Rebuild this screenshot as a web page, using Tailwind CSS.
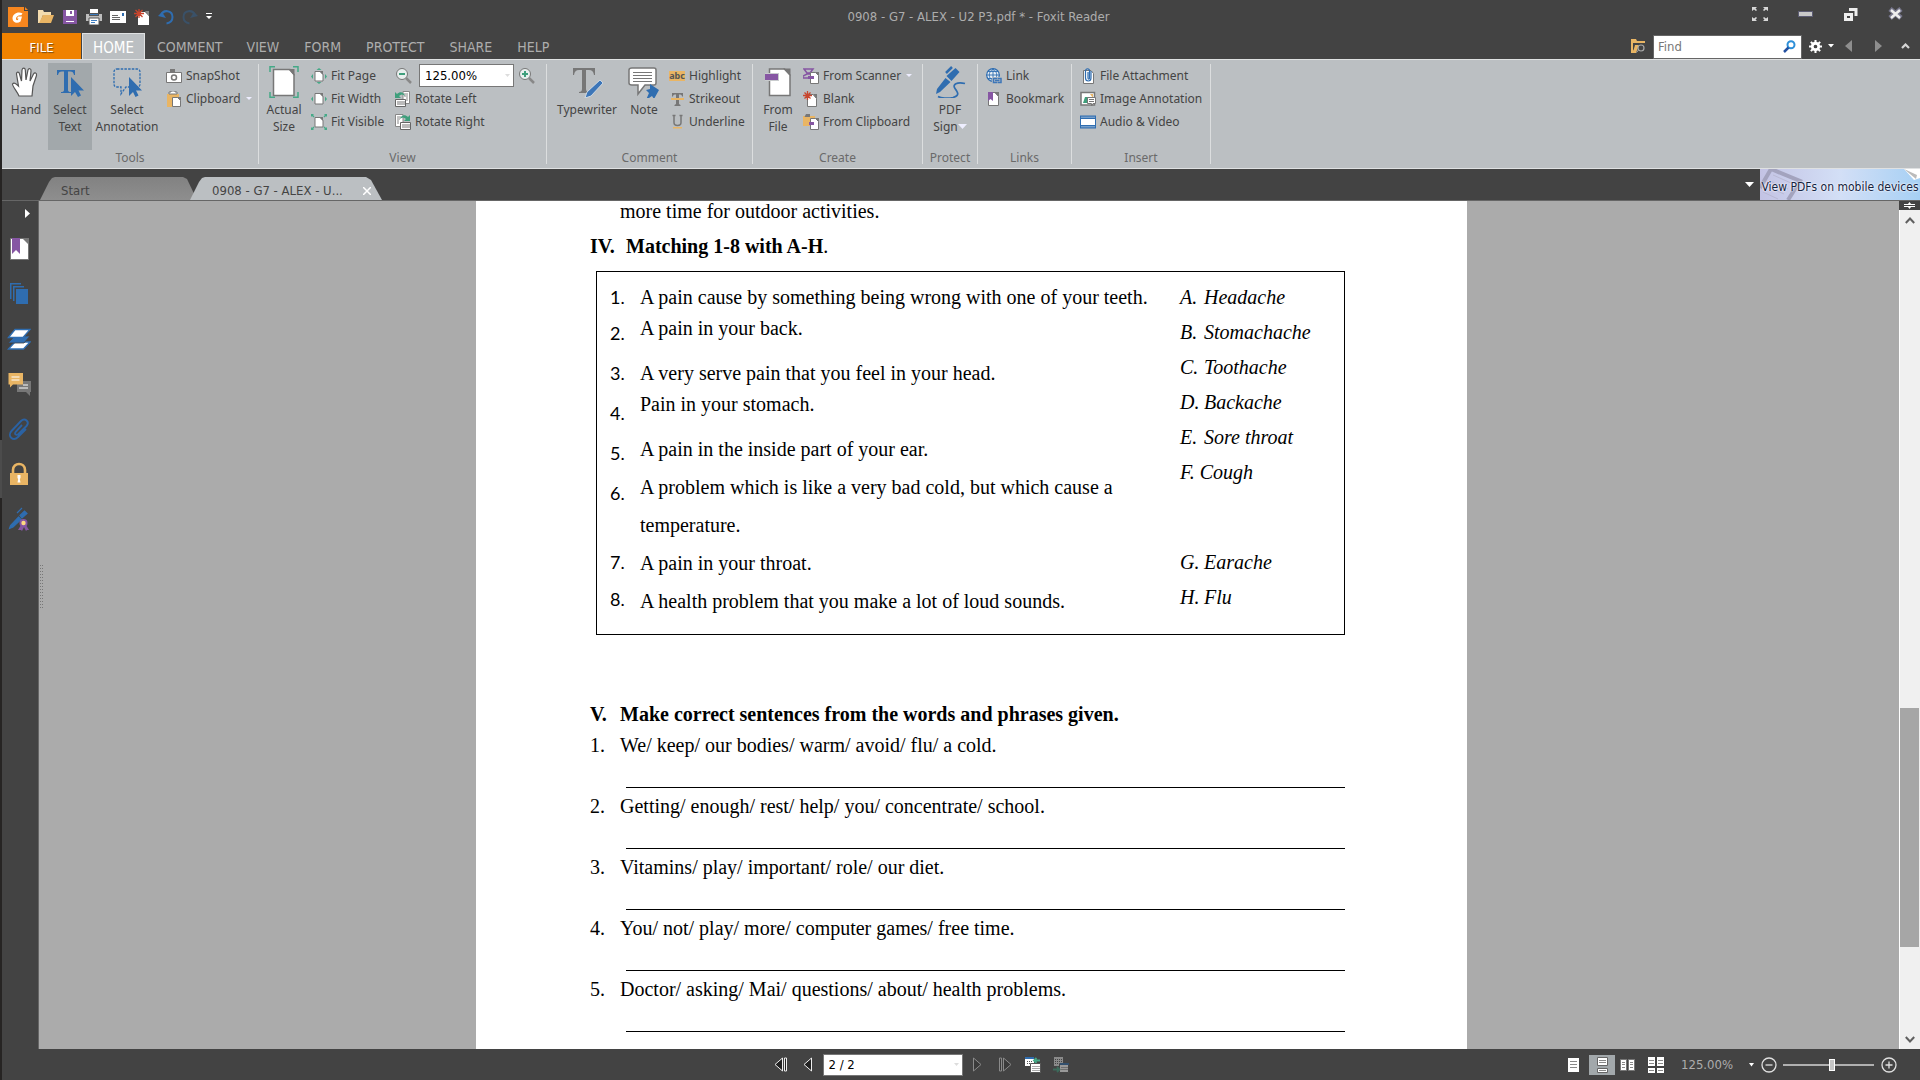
<!DOCTYPE html>
<html lang="en">
<head>
<meta charset="utf-8">
<meta name="viewport" content="width=device-width, initial-scale=1">
<title>0908 - G7 - ALEX - U2 P3.pdf * - Foxit Reader</title>
<script src="https://cdn.jsdelivr.net/npm/@tailwindcss/browser@4"></script>
</head>
<body class="flex h-screen overflow-hidden bg-[#434343] font-['DejaVu_Sans_Condensed','DejaVu_Sans',sans-serif] text-[13px] text-[#444]">

<!-- window edge -->
<div class="flex w-[2px] shrink-0 flex-col bg-[#262423]"><div class="grow-[440]"></div><div class="grow-[58] bg-[#4c4c4c]"></div><div class="grow-[582]"></div></div>

<div class="flex min-w-0 flex-1 flex-col">

<!-- title bar -->
<header class="grid h-[33px] shrink-0 grid-cols-[1fr_auto_1fr] items-start">
  <div class="flex h-[33px] items-center gap-2 pl-[6px]">
    <svg class="size-5" viewBox="0 0 20 20" aria-hidden="true"><path d="M0 0h16v4h4v16H0z" fill="#f6861f"/><path d="M17 0l3 3h-3z" fill="#f6861f"/><path d="M14.500 6.500C10 4 4.500 7 4.500 11.500c0 4 4.500 5.500 8 3l1.500-5H10l-1 2h1.500l-.6 1.600c-1.200.4-2-.3-1.900-1.500.2-2.500 3-4 5.300-3.300z" fill="#fff"/></svg>
    <button aria-label="Open" class="ml-[2px]"><svg class="size-4" viewBox="0 0 16 16"><path d="M0 1h5l1 2h7v3H5L2 14H0z" fill="#f3dcae"/><path d="M5 6h11l-3 8H1z" fill="#e9b564"/></svg></button>
    <button aria-label="Save"><svg class="size-4" viewBox="0 0 16 16"><path d="M1 1h14v14H1z" fill="#8656a3"/><path d="M4 1h8v6H4z" fill="#fff"/><path d="M8 2h2v3H8z" fill="#8656a3"/><path d="M4 12h8v1H4z" fill="#fff"/></svg></button>
    <button aria-label="Print"><svg class="size-4" viewBox="0 0 16 16"><path d="M4 0h8v4H4z" fill="#fff"/><path d="M0 5h16v7H0z" fill="#bdbdbd"/><path d="M3 4h10v3H3z" fill="#555"/><path d="M4 5h8v1H4z" fill="#3d7dc0"/><path d="M3 9h10v7H3z" fill="#fff" stroke="#555"/><path d="M5 11h6v1H5zM5 13h4v1H5z" fill="#3d7dc0"/></svg></button>
    <button aria-label="Email"><svg class="size-4" viewBox="0 0 16 16"><path d="M0 2h16v12H0z" fill="#fff"/><path d="M2 6h6v1H2zM2 8h8v1H2zM2 10h8v1H2z" fill="#666"/><path d="M12 4h2v3h-2z" fill="#2f6db0"/></svg></button>
    <button aria-label="New"><svg class="size-4" viewBox="0 0 16 16"><path d="M4 3h7l4 4v9H4z" fill="#fff"/><path d="M11 2h4v5z" fill="#888"/><path d="M5 0v9M0 4.500h10M1.500 1l7 7M8.500 1l-7 7" stroke="#c8452d" stroke-width="1.300"/></svg></button>
    <button aria-label="Undo"><svg class="size-4" viewBox="0 0 16 16"><path d="M3 6.500C5 0 14.500 1 14.500 8c0 4-3 6-6 6.500" fill="none" stroke="#2f6db0" stroke-width="2"/><path d="M0 7l4-4 4 6z" fill="#2f6db0"/></svg></button>
    <button aria-label="Redo"><svg class="size-4" viewBox="0 0 16 16"><path d="M13 6.500C11 0 1.500 1 1.500 8c0 4 3 6 6 6.500" fill="none" stroke="#3a5168" stroke-width="2"/><path d="M16 7l-4-4-4 6z" fill="#3a5168"/></svg></button>
    <button aria-label="Customize toolbar"><svg class="h-[7px] w-[6px]" viewBox="0 0 6 7"><path d="M0 0h6v1H0zM0 3h6L3 6z" fill="#fff"/></svg></button>
  </div>
  <h1 class="pl-[35px] leading-[34px] text-[#adadad]">0908 - G7 - ALEX - U2 P3.pdf * - Foxit Reader</h1>
  <div class="flex h-7 items-center justify-end gap-[30px] pr-[17px]">
    <button aria-label="Full screen"><svg class="size-4" viewBox="0 0 16 16" fill="#d8d8d8"><path d="M0 1h5L3.500 2.500 5 4 4 5 2 3.500 0 5zM16 1h-5l1.500 1.500L11 4l1 1 2-1.500L16 5zM0 15h5l-1.500-1.500L5 12l-1-1-2 1.500L0 11zM16 15h-5l1.500-1.500L11 12l1-1 2 1.500 2-1.500z"/></svg></button>
    <button aria-label="Minimize"><svg class="h-4 w-[15px]" viewBox="0 0 15 16"><path d="M.5 5.500h14v5H.5z" fill="#c9c9c9" stroke="#5c5c74"/></svg></button>
    <button aria-label="Restore"><svg class="h-4 w-[15px]" viewBox="0 0 15 16" fill="none" stroke="#eee" stroke-width="3"><path d="M2.500 8.500h6v5h-6z"/><path d="M6 3.500h7V10"/></svg></button>
    <button aria-label="Close"><svg class="h-4 w-[15px]" viewBox="0 0 15 16"><path d="M2 3l11 9M13 3L2 12" stroke="#77778c" stroke-width="5"/><path d="M3 4l9 8M12 4l-9 8" stroke="#eee" stroke-width="2.500"/></svg></button>
  </div>
</header>

<!-- ribbon tabs -->
<nav class="flex h-[26px] shrink-0 items-stretch justify-between">
  <div class="flex gap-px text-[14px] text-[#adadad] *:pt-[3px]">
    <button class="w-[79px] bg-[#f08200] text-[13px] text-white [text-shadow:1px_1px_1px_#7a4a10]">FILE</button>
    <button class="-mb-px w-[63px] border border-b-0 border-[#dfe1e2] bg-[#bbbfc2] text-[15px] text-white">HOME</button>
    <button class="px-[11px]">COMMENT</button>
    <button class="px-[12px]">VIEW</button>
    <button class="px-[12px]">FORM</button>
    <button class="px-[12px]">PROTECT</button>
    <button class="px-[12px]">SHARE</button>
    <button class="px-[12px]">HELP</button>
  </div>
  <div class="flex items-center pr-[10px]">
    <button aria-label="Search folder" class="mr-[8px]"><svg class="h-[15px] w-[14px]" viewBox="0 0 14 15"><path d="M0 0h5l1 2h8v2H0z" fill="#e9b564"/><path d="M0 4h2v8l3-6h1L4 14H0z" fill="#e9b564"/><path d="M4 6h4l-3 8H2z" fill="#e9b564"/><circle cx="10" cy="9" r="3" fill="#444" stroke="#a8a8a8" stroke-width="1.200"/><path d="M7.500 11l-2 2.500" stroke="#a8a8a8"/></svg></button>
    <div class="mt-px flex h-6 w-[149px] items-center border border-[#666] bg-white pr-[5px] pl-[4px]">
      <input aria-label="Find" placeholder="Find" class="w-full min-w-0 text-[13px] outline-none placeholder:text-[#777]">
      <svg class="size-[13px] shrink-0" viewBox="0 0 13 13" fill="none"><circle cx="8" cy="4.800" r="3.500" stroke="#2d8fd8" stroke-width="2"/><path d="M5.500 7.500L1 12" stroke="#2450a0" stroke-width="2.500"/></svg>
    </div>
    <button aria-label="Settings" class="ml-[7px]"><svg class="size-[13px]" viewBox="0 0 14 14"><circle cx="7" cy="7" r="3.500" fill="none" stroke="#fff" stroke-width="3"/><path d="M7 0v3M7 11v3M0 7h3M11 7h3M2 2l2 2M10 10l2 2M12 2l-2 2M4 10l-2 2" stroke="#fff" stroke-width="2.200"/></svg></button>
    <button aria-label="Settings menu" class="ml-[6px]"><svg class="h-[4px] w-[6px]" viewBox="0 0 6 4"><path d="M0 0h6L3 3.500z" fill="#fff"/></svg></button>
    <button aria-label="Previous" class="ml-[11px]"><svg class="h-[12px] w-[7px]" viewBox="0 0 7 12"><path d="M7 0v12L0 6z" fill="#8e8e8e"/></svg></button>
    <button aria-label="Next" class="ml-[23px]"><svg class="h-[12px] w-[7px]" viewBox="0 0 7 12"><path d="M0 0v12l7-6z" fill="#8e8e8e"/></svg></button>
    <button aria-label="Collapse ribbon" class="ml-[19px]"><svg class="h-[6px] w-[9px]" viewBox="0 0 9 6"><path d="M1 5l3.500-3.500L8 5" fill="none" stroke="#d5d5d5" stroke-width="2.200"/></svg></button>
  </div>
</nav>

<!-- ribbon -->
<section class="flex h-[110px] shrink-0 border-y border-[#dfe1e2] bg-[#bbbfc2] py-1 font-['Noto_Sans',sans-serif] text-[12px] leading-[17px]">
  <div class="flex w-[257px] flex-col border-r border-[#dcdedf]">
    <div class="flex flex-1 items-start pl-[2px]">
      <button class="flex w-11 flex-col items-center gap-[3px] pt-[2px]"><svg class="size-8" viewBox="0 0 32 32"><path d="M9 30c-2-5-7-10-6.500-12 1.500-2 4 0 6 2L6.500 8C6.500 5.500 9 5.500 9.500 8l2 7L12 4c.5-2.500 3-2.500 3.300 0l.7 10 2-10c.8-2 3.300-1.600 3 1l-1 10 3.500-7c1.300-2 3.500-1 3 1.500L23 20l-1 10z" fill="#fff" stroke="#555" stroke-width="1.200"/></svg>Hand</button>
      <button class="-mt-px flex h-[87px] w-11 flex-col items-center gap-[3px] bg-[#a2a8ab] pt-[3px]"><svg class="size-8" viewBox="0 0 32 32" fill="#2f6db0"><path d="M3 4h18v5h-1c-.5-2.500-1.500-3.500-4-3.500h-2V24c0 1.500 1 2 3 2v1H7v-1c2 0 3-.5 3-2V5.500H8C5.500 5.500 4.500 6.500 4 9H3z"/><path d="M17 11v19l4-4 3 5 3-1.500-2.500-5H30z"/></svg><span>Select<br>Text</span></button>
      <button class="flex w-[70px] flex-col items-center gap-[3px] pt-[2px]"><svg class="size-8" viewBox="0 0 32 32"><path d="M6 3h20q3 0 3 3v12q0 3-3 3H15l-5 7v-7H6q-3 0-3-3V6q0-3 3-3z" fill="none" stroke="#2f6db0" stroke-width="1.300" stroke-dasharray="2.500 1.200"/><path d="M18 11v19l4-4 2.500 5 3-1.500-2.500-5H31z" fill="#2f6db0"/></svg><span>Select<br>Annotation</span></button>
      <div class="flex flex-col pl-[4px]">
        <button class="flex h-[23px] items-center gap-1"><svg class="size-4" viewBox="0 0 16 16"><path d="M.5 4.500h15v10H.5z" fill="#fff" stroke="#777"/><path d="M4 1h5v3H4z" fill="#777"/><circle cx="8" cy="9.500" r="2.500" fill="none" stroke="#777" stroke-width="1.500"/></svg>SnapShot</button>
        <button class="flex h-[23px] items-center gap-1"><svg class="size-4" viewBox="0 0 16 16"><path d="M1 3h12v13H1z" fill="#e9b564"/><path d="M3 3V1h2V0h4v1h2v2z" fill="#fff" stroke="#777"/><path d="M6.500 6.500h5l3 3v6h-8z" fill="#fff" stroke="#777"/><path d="M11 6h4v4z" fill="#777"/></svg>Clipboard<svg class="ml-[1px] h-[4px] w-[6px]" viewBox="0 0 6 4"><path d="M0 0h6L3 3z" fill="#eef"/></svg></button>
      </div>
    </div>
    <h2 class="text-center leading-[12px] text-[#6a6a6a]">Tools</h2>
  </div>

  <div class="flex w-[288px] flex-col border-r border-[#dcdedf]">
    <div class="flex flex-1 items-start">
      <button class="flex w-[50px] flex-col items-center gap-[3px] pt-[2px]"><svg class="size-8" viewBox="0 0 32 32"><path d="M5.500 3.500H22l4 5V29.500H5.500z" fill="#fff" stroke="#777" stroke-width="1.500"/><path d="M20 3h6.500v7z" fill="#777"/><path d="M2 6V.8h5M25 .8h5V6M2 26v5.300h5M25 31.300h5V26" fill="none" stroke="#45a987" stroke-width="1.500"/></svg><span>Actual<br>Size</span></button>
      <div class="flex w-[86px] flex-col pl-[2px]">
        <button class="flex h-[23px] items-center gap-1 whitespace-nowrap"><svg class="size-4" viewBox="0 0 16 16"><path d="M4 3.500h5l3 3v6.500H4z" fill="#fff" stroke="#777"/><path d="M8.500 3H12v4z" fill="#777"/><path d="M5.500 2h5L8 0zM5.500 14h5L8 16zM2 6v5L0 8.500zM14 6v5l2-2.500z" fill="#45a987"/></svg>Fit Page</button>
        <button class="flex h-[23px] items-center gap-1 whitespace-nowrap"><svg class="size-4" viewBox="0 0 16 16"><path d="M4 2.500h5l3 3V13H4z" fill="#fff" stroke="#777"/><path d="M8.500 2H12v4z" fill="#777"/><path d="M2 5.500v5L0 8zM14 5.500v5L16 8z" fill="#45a987"/></svg>Fit Width</button>
        <button class="flex h-[23px] items-center gap-1 whitespace-nowrap"><svg class="size-4" viewBox="0 0 16 16"><path d="M4 3.500h5l3 3V13H4z" fill="#fff" stroke="#777"/><path d="M8.500 3H12v4z" fill="#777"/><path d="M0 0h3L2 1l1.500 1.500-1 1L1 2 0 3zM16 0h-3l1 1-1.500 1.500 1 1L15 2l1 1zM0 16h3l-1-1 1.500-1.500-1-1L1 14l-1-1zM16 16h-3l1-1-1.500-1.500 1-1L15 14l1-1z" fill="#45a987"/></svg>Fit Visible</button>
      </div>
      <div class="flex flex-col">
        <div class="flex h-[23px] items-center">
          <button aria-label="Zoom out" class="mr-[6px]"><svg class="size-[18px]" viewBox="0 0 18 18"><path d="M11 11l5 5" stroke="#888" stroke-width="2.500"/><circle cx="7" cy="7" r="5.500" fill="#e9efee" stroke="#777"/><path d="M4 6h6v2H4z" fill="#3f9f7c"/></svg></button>
          <select aria-label="Zoom" class="h-[23px] w-[95px] appearance-none border border-[#777] bg-white pl-[5px] font-['DejaVu_Sans_Condensed','DejaVu_Sans',sans-serif] text-[13px] leading-[20px] text-black"><option>125.00%</option></select>
          <svg class="-ml-[9px] h-[4px] w-[5px]" viewBox="0 0 5 4"><path d="M0 0h5L2.500 3z" fill="#ddd"/></svg>
          <button aria-label="Zoom in" class="ml-[8px]"><svg class="size-[18px]" viewBox="0 0 18 18"><path d="M11 11l5 5" stroke="#888" stroke-width="2.500"/><circle cx="7" cy="7" r="5.500" fill="#e9efee" stroke="#777"/><path d="M4 6h6v2H4zM6 4h2v6H6z" fill="#3f9f7c"/></svg></button>
        </div>
        <button class="flex h-[23px] items-center gap-1"><svg class="size-4" viewBox="0 0 16 16"><path d="M8 .5h6.500v12H8z" fill="#fff" stroke="#888"/><path d="M9 3h4M9 5h4M11 7h2M11 9h2" stroke="#888"/><path d="M0 1v6h6L4 5c2-2 4-2 6 0-1-4-5-5-8-2z" fill="#3f9f7c"/><path d="M.5 8.500h10v7H.5z" fill="#fff" stroke="#666"/><path d="M3 10v4M5 10v4M7 10v4M9 10v4" stroke="#777"/></svg>Rotate Left</button>
        <button class="flex h-[23px] items-center gap-1"><svg class="size-4" viewBox="0 0 16 16"><path d="M.5.500H8v12H.5z" fill="#fff" stroke="#888"/><path d="M2 3h4M2 5h3M2 7h2M2 9h2" stroke="#888"/><path d="M15 1v6H9l2-2C9 3 7 3 5 5c1-4 5-5 8-2z" fill="#3f9f7c"/><path d="M5.500 8.500h10v7h-10z" fill="#fff" stroke="#666"/><path d="M8 10v4M10 10v4M12 10v4M14 10v4" stroke="#777"/></svg>Rotate Right</button>
      </div>
    </div>
    <h2 class="text-center leading-[12px] text-[#6a6a6a]">View</h2>
  </div>

  <div class="flex w-[206px] flex-col border-r border-[#dcdedf]">
    <div class="flex flex-1 items-start pl-[4px]">
      <button class="flex w-[72px] flex-col items-center gap-[3px] pt-[2px]"><svg class="size-8" viewBox="0 0 32 32"><path d="M2 2h22v7h-1c-.5-3.500-2-5-5-5h-3v19c0 2 1 3 3 3v1H8v-1c2 0 3-1 3-3V4H8C5 4 3.500 5.500 3 9H2z" fill="#777"/><path d="M29 14l3 3-12 13-6 2 2-6z" fill="#3d76b8" stroke="#dfe4e8" stroke-width=".8"/></svg>Typewriter</button>
      <button class="flex w-[42px] flex-col items-center gap-[3px] pt-[2px]"><svg class="size-8" viewBox="0 0 32 32"><path d="M4 2h22q2 0 2 2v13q0 2-2 2H17l-7 9v-9H4q-3 0-3-2V4q0-2 3-2z" fill="#fff" stroke="#777" stroke-width="1.500"/><path d="M5 6.500h19M5 9.500h19M5 12.500h19M5 15.500h19" stroke="#777"/><path d="M22 18l9 6-5 9-2-3-6 4 3-7-3-3 4-1z" fill="#2f6db0"/></svg>Note</button>
      <div class="flex flex-col pl-[4px]">
        <button class="flex h-[23px] items-center gap-1"><span class="flex h-[10px] w-4 items-center justify-center bg-[#e9b564] text-[9px] leading-[10px] font-bold text-[#555]" aria-hidden="true">abc</span>Highlight</button>
        <button class="flex h-[23px] items-center gap-1"><svg class="size-4" viewBox="0 0 16 16"><path d="M3 2h11v3.500h-1C13 4 12 3.500 10 3.500V13l1.500 1v1h-6v-1L7 13V3.500C5 3.500 4 4 4 5.500H3z" fill="#777"/><path d="M2 7h13v2H2z" fill="#e9b564"/></svg>Strikeout</button>
        <button class="flex h-[23px] items-center gap-1"><svg class="size-4" viewBox="0 0 16 16"><path d="M5 1.500v7q0 3 3.500 3t3.500-3v-7M3.500 1.500h3M10.500 1.500h3" fill="none" stroke="#777" stroke-width="1.500"/><path d="M4 13h9v1.500H4z" fill="#e9b564"/></svg>Underline</button>
      </div>
    </div>
    <h2 class="text-center leading-[12px] text-[#6a6a6a]">Comment</h2>
  </div>

  <div class="flex w-[170px] flex-col border-r border-[#dcdedf]">
    <div class="flex flex-1 items-start">
      <button class="flex w-[50px] flex-col items-center gap-[3px] pt-[2px]"><svg class="size-8" viewBox="0 0 32 32"><path d="M7.500 3h15l5.500 6v20.500H7.500z" fill="#fff" stroke="#777" stroke-width="1.500"/><path d="M21 2.500h7.500V10z" fill="#777"/><path d="M3 7h14v8H3z" fill="#c8cbcd"/><path d="M3 8h13v6H3z" fill="#8656a3"/></svg><span>From<br>File</span></button>
      <div class="flex flex-col">
        <button class="flex h-[23px] items-center gap-1"><svg class="size-4" viewBox="0 0 16 16"><path d="M1 1h9L7 5H4zM0 8l4-2h5v4H0z" fill="none" stroke="#8656a3" stroke-width="1.500"/><path d="M7.500 4.500h5l3 3v8h-8z" fill="#fff" stroke="#777"/><path d="M12 4h4v4z" fill="#777"/><path d="M5 8h6v3H5z" fill="#8656a3"/></svg>From Scanner<svg class="ml-[1px] h-[4px] w-[6px]" viewBox="0 0 6 4"><path d="M0 0h6L3 3z" fill="#eef"/></svg></button>
        <button class="flex h-[23px] items-center gap-1"><svg class="size-4" viewBox="0 0 16 16"><path d="M4.500 3.500H10l3.500 4v8h-9z" fill="#fff" stroke="#777"/><path d="M10 3h4v5z" fill="#777"/><path d="M4.500 0v9M0 4.500h9M1.500 1.500l6 6M7.500 1.500l-6 6" stroke="#c8452d" stroke-width="1.300"/></svg>Blank</button>
        <button class="flex h-[23px] items-center gap-1"><svg class="size-4" viewBox="0 0 16 16"><path d="M0 2h12v10H0z" fill="#e9b564"/><path d="M3 0h4v3H1.500z" fill="#777"/><path d="M7.500 4.500h5l3 3v8h-8z" fill="#fff" stroke="#777"/><path d="M12 4h4v4z" fill="#777"/><path d="M6 8h5v3H6z" fill="#8656a3"/></svg>From Clipboard</button>
      </div>
    </div>
    <h2 class="text-center leading-[12px] text-[#6a6a6a]">Create</h2>
  </div>

  <div class="flex w-[55px] flex-col border-r border-[#dcdedf]">
    <div class="flex flex-1 items-start">
      <button class="flex w-[54px] flex-col items-center gap-[3px] pt-[2px]"><svg class="size-8" viewBox="0 0 32 32"><path d="M12 7l6-6" stroke="#2f6db0" stroke-width="2.500"/><path d="M21.500 2l4 4-8 9-5-5zM11.500 12l5 4L6 26l-4 2 1-5z" fill="#2f6db0"/><path d="M31 17.500c-8-2-13 1-10 5s5 7-2 9c-5 1.200-12 .5-15-1" fill="none" stroke="#2f6db0" stroke-width="1.700"/></svg><span>PDF<br>Sign<svg class="mb-[3px] inline h-[5px] w-[9px]" viewBox="0 0 9 5"><path d="M0 0h9L4.500 5z" fill="#eef"/></svg></span></button>
    </div>
    <h2 class="text-center leading-[12px] text-[#6a6a6a]">Protect</h2>
  </div>

  <div class="flex w-[94px] flex-col border-r border-[#dcdedf]">
    <div class="flex flex-1 flex-col pl-[8px]">
      <button class="flex h-[23px] items-center gap-1"><svg class="size-4" viewBox="0 0 16 16"><circle cx="7" cy="7" r="6.300" fill="#e8eef5" stroke="#2f6db0" stroke-width="1.200"/><path d="M7 0v14M0 7h14M2 3.500h10M2 10.500h10M7 1C2 4 2 10 7 13M7 1c5 3 5 9 0 12" fill="none" stroke="#2f6db0" stroke-width=".9"/><path d="M6 9h10v7H6z" fill="#bbbfc2"/><path d="M11 10.500H7.500v4H11M11.500 14.500H15v-4h-3.500M9 12.500h4.500" fill="none" stroke="#3d76b8" stroke-width="1.500"/></svg>Link</button>
      <button class="flex h-[23px] items-center gap-1"><svg class="size-4" viewBox="0 0 16 16"><path d="M2.500 1.500H9l3.500 4v9h-10z" fill="#fff" stroke="#777"/><path d="M8 1h5v5z" fill="#777"/><path d="M2 1h5v9L4.500 8 2 10z" fill="#8656a3"/></svg>Bookmark</button>
    </div>
    <h2 class="text-center leading-[12px] text-[#6a6a6a]">Links</h2>
  </div>

  <div class="flex w-[139px] flex-col border-r border-[#dcdedf]">
    <div class="flex flex-1 flex-col pl-[8px]">
      <button class="flex h-[23px] items-center gap-1"><svg class="size-4" viewBox="0 0 16 16"><path d="M3.500 2.500H11l2.500 3v10h-10z" fill="#fff" stroke="#777"/><path d="M11 3v7c0 4-5.500 4-5.500 0V3c0-3 4-3 4 0v7c0 1.500-1.500 1.500-1.500 0V4" fill="none" stroke="#2f6db0" stroke-width="1.200"/></svg>File Attachment</button>
      <button class="flex h-[23px] items-center gap-1"><svg class="size-4" viewBox="0 0 16 16"><path d="M1 1.500h13.500V14H1z" fill="#fff" stroke="#777" stroke-width="1.500"/><path d="M3 12l2-6h3l3 6z" fill="#3f9f7c"/><path d="M10 3h3v4z" fill="#e9b564"/><path d="M7.500 6.500h8v6H13L11.500 15v-2.500h-4z" fill="#fff" stroke="#777"/><path d="M9 8.500h5M9 10.500h5" stroke="#777"/></svg>Image Annotation</button>
      <button class="flex h-[23px] items-center gap-1"><svg class="size-4" viewBox="0 0 16 16"><path d="M0 1.500h16v13H0z" fill="#2f6db0"/><path d="M1 5h14v6H1z" fill="#fff"/><path d="M1.500 3.200h14M1.500 12.800h14" stroke="#fff" stroke-dasharray="1 1"/></svg>Audio &amp; Video</button>
    </div>
    <h2 class="text-center leading-[12px] text-[#6a6a6a]">Insert</h2>
  </div>
</section>

<!-- document tabs -->
<div class="flex h-8 shrink-0 items-end justify-between border-b border-[#666]">
  <div class="flex pl-[38px]">
    <button class="h-[23px] w-[157px] bg-linear-to-b from-[#828282] to-[#8e8e8e] pt-[4px] pl-[21px] text-left leading-[18px] [clip-path:polygon(0_100%,9px_5px,12px_1px,15px_0,143px_0,147px_2px,157px_100%)]">Start</button>
    <div class="-ml-[7px] flex h-[23px] w-[192px] items-center justify-between bg-[#bbbfc2] pt-[4px] pr-[11px] pl-[22px] [clip-path:polygon(0_100%,9px_5px,12px_1px,15px_0,176px_0,181px_3px,192px_100%)]">
      <button>0908 - G7 - ALEX - U...</button>
      <button aria-label="Close tab"><svg class="size-[8px]" viewBox="0 0 8 8"><path d="M0 0l8 8M8 0L0 8" stroke="#fff" stroke-width="1.500"/></svg></button>
    </div>
  </div>
  <div class="flex items-center">
    <button aria-label="Tab list" class="mr-[6px]"><svg class="h-[5px] w-[9px]" viewBox="0 0 9 5"><path d="M0 0h9L4.500 5z" fill="#fff"/></svg></button>
    <a href="#" class="relative flex h-[31px] w-[160px] items-center justify-center bg-linear-to-r from-[#c3c3e4] via-[#d3dff6] to-[#a6d0f4] pt-1 whitespace-nowrap">
      <svg class="absolute inset-0 h-full w-full" viewBox="0 0 160 31"><path d="M11 0l29 12-12 19M11 0L0 19" fill="none" stroke="#a3a3be" stroke-width="4"/><path d="M13 6l18 8M10 12l18 8M6 17l18 8M3 23l15 7" stroke="#b9b9d4"/><path d="M144 0h16v9l-6 2z" fill="#fff"/><path d="M144 0l12 10 1-4z" fill="#bbb"/></svg>
      <span class="relative text-[12px] text-[#14233f] [text-shadow:0_0_2px_#fff,0_0_2px_#fff]">View PDFs on mobile devices</span>
    </a>
  </div>
</div>

<!-- workspace -->
<div class="flex min-h-0 flex-1">
  <nav class="flex w-[37px] shrink-0 flex-col items-center border-r border-[#666] pr-[3px]" aria-label="Panels">
    <button aria-label="Expand panel" class="mr-[5px] flex h-[25px] items-center self-end"><svg class="h-[9px] w-[5px]" viewBox="0 0 5 9"><path d="M0 0v9l5-4.500z" fill="#fff"/></svg></button>
    <button aria-label="Bookmarks" class="flex h-[45px] items-center"><svg class="size-6" viewBox="0 0 24 24"><path d="M3.500 1.500h13l5 5v16h-18z" fill="#fff" stroke="#777"/><path d="M15 1h7v7z" fill="#777"/><path d="M5 1h8v16l-4-4-4 4z" fill="#8656a3"/></svg></button>
    <button aria-label="Pages" class="flex h-[45px] items-center"><svg class="size-6" viewBox="0 0 24 24" fill="#2f6db0"><path d="M3 1h11v1.500H4.500V17H3zM6 4h11v1.500H7.500V19H6zM9 7h12v15H9z"/></svg></button>
    <button aria-label="Layers" class="flex h-[45px] items-center"><svg class="size-6" viewBox="0 0 24 24"><path d="M1.500 22L8 15h15l-6.500 7z" fill="#fff" stroke="#2f6db0" stroke-width="1.300"/><path d="M1 16l7-7h15l-6 7z" fill="#2f6db0" stroke="#434343" stroke-width=".8"/><path d="M1.500 10.500L8 2.500h15l-7 8z" fill="#fff" stroke="#2f6db0" stroke-width="1.300"/></svg></button>
    <button aria-label="Comments" class="flex h-[45px] items-center"><svg class="size-6" viewBox="0 0 24 24"><path d="M10 9h14v11h-1v4l-4-4h-9z" fill="#777"/><path d="M16 13h5M12 16h9" stroke="#fff"/><path d="M1.500 1h14.500v11.500H6L3 15.500v-3H1.500z" fill="#e9b564"/><path d="M4.500 5h8M4.500 8h8" stroke="#fff" stroke-width="1.200"/></svg></button>
    <button aria-label="Attachments" class="flex h-[45px] items-center"><svg class="size-6" viewBox="0 0 24 24"><path d="M19 12l-8 8c-5 5-11-1-6.500-6L14 4c4-4 9 1 5.500 5l-8 8c-2.500 2-4.500 0-2.500-2.500L15 8" fill="none" stroke="#2b62a3" stroke-width="1.900"/></svg></button>
    <button aria-label="Security" class="flex h-[45px] items-center"><svg class="size-6" viewBox="0 0 24 24"><path d="M6 12V8c0-8 12-8 12 0v4" fill="none" stroke="#e9b564" stroke-width="2.600"/><path d="M3 11h18v12H3z" fill="#e9b564"/><path d="M10.500 13h3v3l-.7 1 .7 3.500h-3l.7-3.500-.7-1z" fill="#fff"/></svg></button>
    <button aria-label="Signatures" class="flex h-[45px] items-center"><svg class="size-6" viewBox="0 0 24 24"><path d="M10 6l5-5M13 8.500l4.500-4.500 2.500 2.500L15 11zM11.500 10l2.500 2.500L6 20l-3.500 1.500 1-3z" stroke="#2f6db0" stroke-width="1.200" fill="#2f6db0"/><path d="M14 18l-3 5h3l1 1 2-4 2 4 1-1h2l-3-5z" fill="#8656a3"/><circle cx="16.500" cy="16" r="4" fill="#8656a3"/><circle cx="16.500" cy="16" r="2.200" fill="#ffd980"/></svg></button>
  </nav>
  <div class="flex w-[5px] shrink-0 flex-col bg-[#ababab]"><div class="grow-[364]"></div><svg class="h-[44px] w-[5px] shrink-0" viewBox="0 0 5 44"><path d="M1.500 0v44M3.500 0v44" stroke="#777" stroke-dasharray="1 2"/></svg><div class="grow-[440]"></div></div>

  <main class="min-w-0 flex-1 overflow-hidden bg-[#ababab]">
    <article class="mx-auto min-h-full w-full max-w-[991px] bg-white pr-[122px] pl-[114px] font-['Liberation_Serif',serif] text-[20px] text-black">
      <p class="pl-[30px] leading-5">more time for outdoor activities.</p>
      <h3 class="mt-[11px] flex leading-7 font-bold"><span class="w-9">IV.</span><span>Matching 1-8 with A-H<span class="font-normal">.</span></span></h3>
      <section class="mt-[11px] mb-[65px] ml-[6px] flex h-[364px] border border-black pl-[13px]">
        <ol class="w-[30px] shrink-0 pt-[5px] font-['Lato',sans-serif] text-[18px] leading-10">
          <li>1.</li><li class="-mt-[4px]">2.</li><li>3.</li><li>4.</li><li>5.</li><li>6.</li><li class="mt-[29px]">7.</li><li class="-mt-[3px]">8.</li>
        </ol>
        <ol class="min-w-0 flex-1 pt-[10px] leading-[31px] whitespace-nowrap">
          <li>A pain cause by something being wrong with one of your teeth.</li>
          <li class="mb-[14px]">A pain in your back.</li>
          <li>A very serve pain that you feel in your head.</li>
          <li class="mb-[14px]">Pain in your stomach.</li>
          <li>A pain in the inside part of your ear.</li>
          <li class="mt-[3px] leading-[38px]">A problem which is like a very bad cold, but which cause a<br>temperature.</li>
          <li class="leading-[38px]">A pain in your throat.</li>
          <li class="leading-[38px]">A health problem that you make a lot of loud sounds.</li>
        </ol>
        <ol class="w-[164px] shrink-0 pt-[8px] leading-[35px] italic">
          <li class="flex"><span class="w-6">A.</span>Headache</li>
          <li class="flex"><span class="w-6">B.</span>Stomachache</li>
          <li class="flex"><span class="w-6">C.</span>Toothache</li>
          <li class="flex"><span class="w-6">D.</span>Backache</li>
          <li class="flex"><span class="w-6">E.</span>Sore throat</li>
          <li class="mb-[55px]">F. Cough</li>
          <li class="flex"><span class="w-6">G.</span>Earache</li>
          <li class="flex"><span class="w-6">H.</span>Flu</li>
        </ol>
      </section>
      <h3 class="mb-[2px] flex leading-7 font-bold"><span class="w-[30px]">V.</span>Make correct sentences from the words and phrases given.</h3>
      <ol class="leading-[30px]">
        <li class="h-[61px]"><div class="flex"><span class="w-[30px]">1.</span>We/ keep/ our bodies/ warm/ avoid/ flu/ a cold.</div><div class="mt-[27px] ml-9 h-px bg-black"></div></li>
        <li class="h-[61px]"><div class="flex"><span class="w-[30px]">2.</span>Getting/ enough/ rest/ help/ you/ concentrate/ school.</div><div class="mt-[27px] ml-9 h-px bg-black"></div></li>
        <li class="h-[61px]"><div class="flex"><span class="w-[30px]">3.</span>Vitamins/ play/ important/ role/ our diet.</div><div class="mt-[27px] ml-9 h-px bg-black"></div></li>
        <li class="h-[61px]"><div class="flex"><span class="w-[30px]">4.</span>You/ not/ play/ more/ computer games/ free time.</div><div class="mt-[27px] ml-9 h-px bg-black"></div></li>
        <li class="h-[61px]"><div class="flex"><span class="w-[30px]">5.</span>Doctor/ asking/ Mai/ questions/ about/ health problems.</div><div class="mt-[27px] ml-9 h-px bg-black"></div></li>
      </ol>
    </article>
  </main>

  <div class="flex w-[21px] shrink-0 flex-col border-l border-white bg-[#f0f0f0]">
    <button aria-label="Split view" class="-ml-px flex h-[9px] shrink-0 items-center justify-center bg-[#434343]"><svg class="h-[7px] w-[11px]" viewBox="0 0 11 7"><path d="M0 2h11v1H0zM0 4h11v1H0zM4 2l1.500-2L7 2zM4 5l1.500 2L7 5z" fill="#fff"/></svg></button>
    <button aria-label="Scroll up" class="flex h-5 shrink-0 items-center justify-center"><svg class="h-[7px] w-[10px]" viewBox="0 0 10 7"><path d="M.8 6L5 1.500 9.200 6" fill="none" stroke="#606060" stroke-width="2"/></svg></button>
    <div class="grow-[478]"></div>
    <div class="mr-px grow-[239] bg-[#a6a6a6]"></div>
    <div class="grow-[82]"></div>
    <button aria-label="Scroll down" class="flex h-5 shrink-0 items-center justify-center"><svg class="h-[7px] w-[10px]" viewBox="0 0 10 7"><path d="M.8 1L5 5.500 9.200 1" fill="none" stroke="#606060" stroke-width="2"/></svg></button>
  </div>
</div>

<!-- status bar -->
<footer class="grid h-[31px] shrink-0 grid-cols-[1fr_auto_1fr] items-center">
  <div></div>
  <div class="flex items-center pr-[80px]">
    <button aria-label="First page" class="mr-[15px]"><svg class="h-[15px] w-[14px]" viewBox="0 0 14 15" fill="#222" stroke="#eee"><path d="M8.500 1v13L1 7.500zM10.500 1h2v13h-2z"/></svg></button>
    <button aria-label="Previous page" class="mr-[11px]"><svg class="h-[15px] w-[9px]" viewBox="0 0 9 15" fill="#222" stroke="#eee"><path d="M8.500 1v13L1 7.500z"/></svg></button>
    <select aria-label="Page" class="h-[22px] w-[140px] appearance-none border border-[#777] bg-white pl-[5px] text-[13px] leading-[20px] text-black"><option>2 / 2</option></select>
    <svg class="-ml-[9px] h-[4px] w-[5px]" viewBox="0 0 5 4"><path d="M0 0h5L2.500 3z" fill="#ddd"/></svg>
    <button aria-label="Next page" class="ml-[14px]"><svg class="h-[15px] w-[9px]" viewBox="0 0 9 15" fill="#3a3a3a" stroke="#8a8a8a"><path d="M.5 1v13L8 7.500z"/></svg></button>
    <button aria-label="Last page" class="ml-[16px]"><svg class="h-[15px] w-[14px]" viewBox="0 0 14 15" fill="#3a3a3a" stroke="#8a8a8a"><path d="M5.500 1v13L13 7.500zM3.500 1h-2v13h2z"/></svg></button>
    <button aria-label="Previous view" class="ml-[13px]"><svg class="size-4" viewBox="0 0 16 16"><path d="M0 0h9v9H0z" fill="#fff"/><path d="M0 0h9v2H0z" fill="#2f6db0"/><path d="M2 4.500h6M2 6.500h4" stroke="#555" stroke-dasharray="1 1"/><path d="M15 3.500h-5M11.500 1L9 3.500 11.500 6" fill="none" stroke="#45a987" stroke-width="1.800"/><path d="M5.500 6.500h10v9h-10z" fill="#fff" stroke="#555"/><path d="M7.500 9.500h7M7.500 11.500h7M7.500 13.500h7" stroke="#555" stroke-dasharray="1 1"/></svg></button>
    <button aria-label="Next view" class="ml-[12px]"><svg class="size-4" viewBox="0 0 16 16"><path d="M1 0h9v9H1z" fill="#8a8a8a"/><path d="M2 2.500h7M2 4.500h7M2 6.500h4" stroke="#444" stroke-dasharray="1 1"/><path d="M6.500 6.500h9v9h-9z" fill="#999" stroke="#444"/><path d="M7 6h9v2H7z" fill="#33506e"/><path d="M8.500 10.500h7M8.500 12.500h7" stroke="#444" stroke-dasharray="1 1"/><path d="M0 12.500h6M4 10l2.500 2.500L4 15" fill="none" stroke="#3c6a5b" stroke-width="1.800"/></svg></button>
  </div>
  <div class="flex items-center justify-end pr-[23px]">
    <button aria-label="Single page" class="mr-[10px]"><svg class="h-[14px] w-[11px]" viewBox="0 0 11 14"><path d="M0 0h11v14H0z" fill="#fff"/><path d="M2 3.500h7M2 6.500h7M2 9.500h7" stroke="#888"/></svg></button>
    <button aria-label="Continuous" class="mr-[5px] flex h-5 w-[26px] items-center justify-center bg-[#a2a8ab]"><svg class="h-4 w-[11px]" viewBox="0 0 11 16"><path d="M.5.500h10v8H.5zM.5 11.500h10v4H.5z" fill="#fff" stroke="#666"/><path d="M2 3.500h7M2 5.500h7M2 13.500h7" stroke="#888"/></svg></button>
    <button aria-label="Facing" class="mr-[12px]"><svg class="h-3 w-4" viewBox="0 0 16 12"><path d="M.5.500h6v11h-6zM8.500.500h6v11h-6z" fill="#fff" stroke="#777"/><path d="M2 3.500h3M2 5.500h3M2 8.500h3M10 3.500h3M10 5.500h3M10 8.500h3" stroke="#888"/></svg></button>
    <button aria-label="Continuous facing" class="mr-[17px]"><svg class="size-4" viewBox="0 0 16 16"><path d="M0 0h7v9H0zM9 0h7v9H9zM0 11h7v5H0zM9 11h7v5H9z" fill="#fff"/><path d="M1 3.500h5M1 6.500h5M10 3.500h5M10 6.500h5M1 13.500h5M10 13.500h5" stroke="#888"/></svg></button>
    <button class="mr-[16px] flex w-[52px] text-[13px] text-[#adadad]">125.00%</button>
    <svg class="mr-[7px] h-[4px] w-[5px]" viewBox="0 0 5 4"><path d="M0 0h5L2.500 3.500z" fill="#fff"/></svg>
    <button aria-label="Zoom out" class="mr-[6px]"><svg class="size-4" viewBox="0 0 16 16" fill="none" stroke="#e0e0e0" stroke-width="1.300"><circle cx="8" cy="8" r="7"/><path d="M4.500 8h7"/></svg></button>
    <input aria-label="Zoom level" type="range" min="0" max="100" value="54" class="mr-[7px] h-3 w-[91px] appearance-none bg-transparent [&::-webkit-slider-runnable-track]:h-[2px] [&::-webkit-slider-runnable-track]:bg-[#b0b0b0] [&::-webkit-slider-thumb]:-mt-[5px] [&::-webkit-slider-thumb]:h-3 [&::-webkit-slider-thumb]:w-[6px] [&::-webkit-slider-thumb]:appearance-none [&::-webkit-slider-thumb]:border [&::-webkit-slider-thumb]:border-white [&::-webkit-slider-thumb]:bg-[#c4c4c4]">
    <button aria-label="Zoom in"><svg class="size-4" viewBox="0 0 16 16" fill="none" stroke="#e0e0e0" stroke-width="1.300"><circle cx="8" cy="8" r="7"/><path d="M4.500 8h7M8 4.500v7"/></svg></button>
  </div>
</footer>
</div>
</body>
</html>
